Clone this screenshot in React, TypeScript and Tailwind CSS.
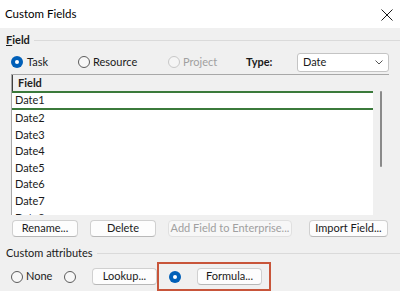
import React from "react";

const font = { fontFamily: 'Lato, "Noto Sans", sans-serif' };

function Radio({ state }: { state: "on" | "off" | "disabled" }) {
  if (state === "on") {
    return (
      <span className="w-[12px] h-[12px] rounded-full bg-[#005fb8] flex items-center justify-center shrink-0">
        <span className="w-[4px] h-[4px] rounded-full bg-white" />
      </span>
    );
  }
  if (state === "disabled") {
    return <span className="w-[12px] h-[12px] rounded-full border border-[#c8c8c8] bg-[#f5f5f5] shrink-0" />;
  }
  return <span className="w-[12px] h-[12px] rounded-full border border-[#5c5c5c] bg-[#f7f7f7] shrink-0" />;
}

function Btn({ label, w, disabled }: { label: string; w: string; disabled?: boolean }) {
  return (
    <div
      className={`${w} h-[17px] rounded-[4px] border flex items-center justify-center text-[11px] whitespace-nowrap shrink-0 ${
        disabled
          ? "border-[#e0e0e0] bg-[#f7f7f7] text-[#a0a0a0]"
          : "border-[#d0d0d0] border-b-[#b8b8b8] bg-[#fdfdfd] text-[#1a1a1a]"
      }`}
    >
      {label}
    </div>
  );
}

export default function App() {
  const rows = ["Date2", "Date3", "Date4", "Date5", "Date6", "Date7", "Date8"];
  return (
    <div className="w-[400px] h-[291px] bg-[#f0f0f0] overflow-hidden flex flex-col text-[#1a1a1a]" style={font}>
      {/* Title bar */}
      <div className="h-[28px] bg-white flex items-center justify-between pl-[5px] pr-[7px] shrink-0">
        <span className="text-[11.5px] text-black">Custom Fields</span>
        <svg width="12" height="12" viewBox="0 0 12 12" className="mt-[1px]">
          <path d="M0.5 0.5 L11.5 11.5 M11.5 0.5 L0.5 11.5" stroke="#1a1a1a" strokeWidth="1" />
        </svg>
      </div>

      {/* Field group header */}
      <div className="h-[24px] flex items-center pl-[6px] shrink-0">
        <span className="text-[11px] font-bold">
          <span className="underline">F</span>ield
        </span>
        <div className="flex-1 h-px bg-[#dadada] ml-[4px]" />
      </div>

      {/* Radio row */}
      <div className="h-[20px] flex items-center pl-[11px] pr-[11px] text-[11px] shrink-0 whitespace-nowrap">
        <div className="flex items-center gap-[4px] w-[67px]">
          <Radio state="on" />
          <span>Task</span>
        </div>
        <div className="flex items-center gap-[3px] w-[90px]">
          <Radio state="off" />
          <span>Resource</span>
        </div>
        <div className="flex items-center gap-[3px] w-[78px]">
          <Radio state="disabled" />
          <span className="text-[#a0a0a0]">Project</span>
        </div>
        <span className="font-bold w-[51px]">Type:</span>
        <div className="w-[92px] h-[19px] bg-white border border-[#c4c4c4] rounded-[3px] flex items-center justify-between pl-[5px] pr-[5px]">
          <span>Date</span>
          <svg width="8" height="5" viewBox="0 0 8 5">
            <path d="M0.5 0.5 L4 4 L7.5 0.5" stroke="#555" strokeWidth="1" fill="none" />
          </svg>
        </div>
      </div>

      {/* List */}
      <div className="mt-[2px] ml-[11px] mr-[11px] h-[141px] flex border-t border-l border-[#a8a8a8] bg-white shrink-0 overflow-hidden">
        <div className="flex-1 flex flex-col text-[11px]">
          <div className="h-[16px] bg-[#f0f0f0] flex items-center border-l border-[#404040] pl-[5px] shrink-0">
            <span className="font-bold text-[#222]">Field</span>
          </div>
          <div className="h-[19px] border-t-2 border-b-2 border-[#3b7a3b] flex items-center pl-[3px] shrink-0">
            Date1
          </div>
          {rows.map((r) => (
            <div key={r} className="h-[16.6px] flex items-center pl-[3px] shrink-0">
              {r}
            </div>
          ))}
        </div>
        <div className="w-[16px] bg-[#f0f0f0] flex justify-center shrink-0">
          <div className="w-[2px] h-[76px] mt-[16px] bg-[#8a8a8a] rounded-full" />
        </div>
      </div>

      {/* Buttons */}
      <div className="h-[17px] mt-[5px] pl-[12px] flex items-center shrink-0">
        <Btn label="Rename..." w="w-[66px]" />
        <div className="w-[12px]" />
        <Btn label="Delete" w="w-[66px]" />
        <div className="w-[12px]" />
        <Btn label="Add Field to Enterprise..." w="w-[124px]" disabled />
        <div className="w-[17px]" />
        <Btn label="Import Field..." w="w-[79px]" />
      </div>

      {/* Custom attributes header */}
      <div className="h-[17px] mt-[8px] flex items-center pl-[6px] shrink-0">
        <span className="text-[11px] whitespace-nowrap">Custom attributes</span>
        <div className="flex-1 h-px bg-[#dadada] ml-[4px]" />
      </div>

      {/* Bottom row */}
      <div className="mt-[0px] h-[29px] flex items-center pl-[11px] text-[11px] shrink-0">
        <div className="flex items-center gap-[3px] w-[53px]">
          <Radio state="off" />
          <span>None</span>
        </div>
        <div className="w-[28px] flex">
          <Radio state="off" />
        </div>
        <Btn label="Lookup..." w="w-[65px]" />
        <div className="h-[29px] w-[114px] border-2 border-[#c8553a] flex items-center pl-[10px] shrink-0">
          <Radio state="on" />
          <div className="w-[16px]" />
          <Btn label="Formula..." w="w-[65px]" />
        </div>
      </div>
    </div>
  );
}
